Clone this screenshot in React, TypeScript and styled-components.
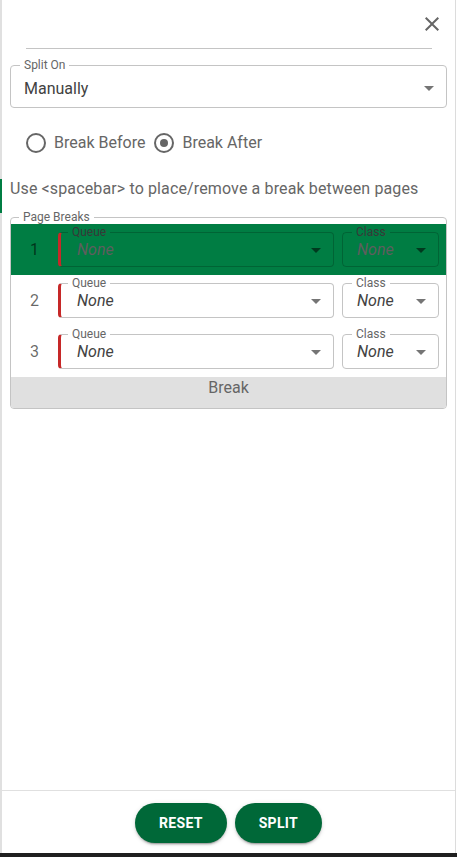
import styled, { createGlobalStyle } from "styled-components";

const GlobalStyle = createGlobalStyle`
  html, body {
    margin: 0;
    padding: 0;
    background: #fff;
  }
  body {
    font-family: Roboto, "Liberation Sans", Arial, sans-serif;
  }
  * {
    box-sizing: border-box;
  }
`;

const green = "#007d43";
const darkGreen = "#006838";

const Screen = styled.div`
  display: flex;
  flex-direction: column;
  width: 457px;
  height: 857px;
`;

const Panel = styled.div`
  position: relative;
  flex: 1;
  display: flex;
  flex-direction: column;
  margin-right: 1px;
  border-left: 2px solid #e0e0e0;
  border-right: 1px solid #dcdcdc;

  /* selection marker of the list behind the drawer */
  &::before {
    content: "";
    position: absolute;
    left: -2px;
    top: 179px;
    width: 2px;
    height: 34px;
    background: ${green};
  }
`;

const Taskbar = styled.div`
  height: 4px;
  background: #1f1f1f;
`;

const Header = styled.header`
  display: flex;
  flex-direction: column;
  padding: 12px 11px 0 24px;
`;

const CloseButton = styled.button`
  align-self: flex-end;
  display: flex;
  width: 24px;
  height: 24px;
  padding: 0;
  border: none;
  background: none;
  color: #666;
  cursor: pointer;
`;

const Divider = styled.hr`
  margin: 12px 12px 0 0;
  border: none;
  border-top: 1px solid #c4c4c4;
`;

const Body = styled.main`
  flex: 1;
  display: flex;
  flex-direction: column;
  padding: 0 8px;
`;

const Outline = styled.fieldset<{ $flag?: boolean; $dim?: boolean }>`
  min-width: 0;
  margin: 0;
  padding: 0;
  border: 1px solid ${({ $dim }) => ($dim ? "rgba(0,0,0,0.2)" : "#c4c4c4")};
  border-left: ${({ $flag, $dim }) =>
    $flag ? "3px solid #c62828" : `1px solid ${$dim ? "rgba(0,0,0,0.2)" : "#c4c4c4"}`};
  border-radius: 4px;
`;

const SplitOutline = styled(Outline)`
  margin-top: 10px;
`;

const Legend = styled.legend<{ $offset: number; $dim?: boolean }>`
  margin-left: ${({ $offset }) => $offset}px;
  padding: 0 4px;
  font-size: 12px;
  line-height: 12px;
  color: ${({ $dim }) => ($dim ? "#383838" : "#666")};
`;

const SelectValue = styled.div<{ $height: number; $indent: number; $lift?: number }>`
  display: flex;
  align-items: center;
  justify-content: space-between;
  height: ${({ $height }) => $height}px;
  padding: 0 5px ${({ $lift = 0 }) => $lift}px ${({ $indent }) => $indent}px;
`;

const ValueText = styled.span<{ $italic?: boolean; $dim?: boolean }>`
  font-size: 16px;
  font-style: ${({ $italic }) => ($italic ? "italic" : "normal")};
  color: ${({ $dim }) => ($dim ? "#5e5e5e" : "#424242")};
`;

const Arrow = styled.svg`
  flex: none;
  width: 24px;
  height: 24px;
  fill: rgba(0, 0, 0, 0.54);
`;

const RadioGroup = styled.div`
  display: flex;
  align-items: center;
  margin-top: 25px;
  padding-left: 16px;
`;

const RadioOption = styled.label`
  display: flex;
  align-items: center;
  gap: 8px;
  margin-right: 9px;
  font-size: 16px;
  line-height: 20px;
  color: #666;
  cursor: pointer;
`;

const RadioCircle = styled.span<{ $checked: boolean }>`
  display: flex;
  align-items: center;
  justify-content: center;
  width: 20px;
  height: 20px;
  border: 2px solid #666;
  border-radius: 50%;

  &::after {
    content: "";
    width: 8px;
    height: 8px;
    border-radius: 50%;
    background: ${({ $checked }) => ($checked ? "#666" : "transparent")};
  }
`;

const Help = styled.p`
  margin: 26px 0 0 0;
  font-size: 16px;
  line-height: 20px;
  letter-spacing: 0.13px;
  color: #666;
`;

const BreaksBox = styled.fieldset`
  min-width: 0;
  margin: 12px 0 0 0;
  padding: 0;
  border: 1px solid #c4c4c4;
  border-radius: 4px;
`;

const BreaksLegend = styled.legend`
  margin-left: 8px;
  padding: 0 4px;
  font-size: 12px;
  line-height: 13px;
  color: #666;
`;

const Row = styled.div<{ $active: boolean }>`
  display: flex;
  align-items: flex-start;
  gap: 8px;
  height: 51px;
  padding: 2px 7px 0 0;
  background: ${({ $active }) => ($active ? green : "transparent")};
`;

const RowNumber = styled.div`
  display: flex;
  align-items: center;
  justify-content: center;
  width: 39px;
  height: 24px;
  margin-top: 11px;
  padding-left: 8px;
  font-size: 16px;
  color: rgba(0, 0, 0, 0.6);
`;

const QueueField = styled(Outline)`
  flex: 1;
`;

const ClassField = styled(Outline)`
  flex: none;
  width: 97px;
`;

const BreakBar = styled.div`
  height: 31px;
  border-radius: 0 0 3px 3px;
  background: #e0e0e0;
  font-size: 16px;
  line-height: 22px;
  text-align: center;
  color: #666;
`;

const Footer = styled.footer`
  display: flex;
  justify-content: center;
  gap: 8px;
  padding: 12px 0 10px;
  border-top: 1px solid #e0e0e0;
`;

const ActionButton = styled.button`
  height: 40px;
  padding: 0 24px;
  border: none;
  border-radius: 20px;
  background: ${darkGreen};
  color: #fff;
  font-family: Roboto, "Liberation Sans", Arial, sans-serif;
  font-size: 14px;
  font-weight: 700;
  letter-spacing: 0.3px;
  box-shadow: 0 3px 1px -2px rgba(0, 0, 0, 0.2), 0 2px 2px rgba(0, 0, 0, 0.14),
    0 1px 5px rgba(0, 0, 0, 0.12);
  cursor: pointer;
`;

function DropArrow() {
  return (
    <Arrow viewBox="0 0 24 24" aria-hidden="true">
      <path d="M7 10l5 5 5-5z" />
    </Arrow>
  );
}

const breaks = [1, 2, 3];

export default function App() {
  return (
    <>
      <GlobalStyle />
      <Screen>
        <Panel>
          <Header>
            <CloseButton aria-label="Close">
              <svg viewBox="0 0 24 24" width="24" height="24" fill="currentColor">
                <path d="M19 6.41L17.59 5 12 10.59 6.41 5 5 6.41 10.59 12 5 17.59 6.41 19 12 13.41 17.59 19 19 17.59 13.41 12z" />
              </svg>
            </CloseButton>
            <Divider />
          </Header>

          <Body>
            <SplitOutline>
              <Legend $offset={9}>Split On</Legend>
              <SelectValue $height={36} $indent={13} $lift={2}>
                <ValueText>Manually</ValueText>
                <DropArrow />
              </SelectValue>
            </SplitOutline>

            <RadioGroup role="radiogroup">
              <RadioOption>
                <RadioCircle $checked={false} />
                Break Before
              </RadioOption>
              <RadioOption>
                <RadioCircle $checked />
                Break After
              </RadioOption>
            </RadioGroup>

            <Help>Use &lt;spacebar&gt; to place/remove a break between pages</Help>

            <BreaksBox>
              <BreaksLegend>Page Breaks</BreaksLegend>
              {breaks.map((n) => {
                const active = n === 1;
                return (
                  <Row key={n} $active={active}>
                    <RowNumber>{n}</RowNumber>
                    <QueueField $flag $dim={active}>
                      <Legend $offset={7} $dim={active}>
                        Queue
                      </Legend>
                      <SelectValue $height={28} $indent={16} $lift={5}>
                        <ValueText $italic $dim={active}>
                          None
                        </ValueText>
                        <DropArrow />
                      </SelectValue>
                    </QueueField>
                    <ClassField $dim={active}>
                      <Legend $offset={9} $dim={active}>
                        Class
                      </Legend>
                      <SelectValue $height={28} $indent={14} $lift={5}>
                        <ValueText $italic $dim={active}>
                          None
                        </ValueText>
                        <DropArrow />
                      </SelectValue>
                    </ClassField>
                  </Row>
                );
              })}
              <BreakBar>Break</BreakBar>
            </BreaksBox>
          </Body>

          <Footer>
            <ActionButton>RESET</ActionButton>
            <ActionButton>SPLIT</ActionButton>
          </Footer>
        </Panel>
        <Taskbar />
      </Screen>
    </>
  );
}
